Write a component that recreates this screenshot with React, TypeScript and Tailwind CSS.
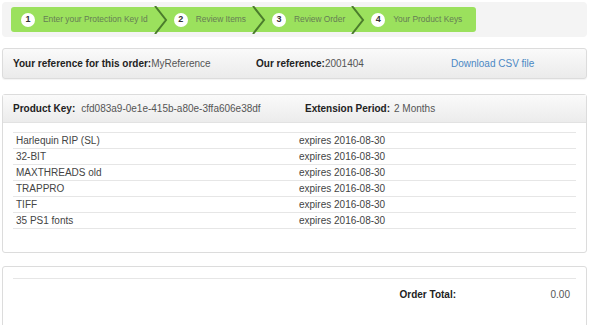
import React from "react";

const steps = [
  { n: 1, label: "Enter your Protection Key Id" },
  { n: 2, label: "Review Items" },
  { n: 3, label: "Review Order" },
  { n: 4, label: "Your Product Keys" },
];

const items = [
  "Harlequin RIP (SL)",
  "32-BIT",
  "MAXTHREADS old",
  "TRAPPRO",
  "TIFF",
  "35 PS1 fonts",
];

function Chevron() {
  return (
    <svg width="14" height="28" viewBox="0 0 14 28" className="shrink-0 -my-[2px]">
      <polyline
        points="1,0 12,14 1,28"
        fill="none"
        stroke="#4b7c2c"
        strokeWidth="2"
      />
    </svg>
  );
}

export default function App() {
  return (
    <div className="w-[589px] h-[325px] overflow-hidden bg-white px-[2px] pt-[2px] font-['Liberation_Sans',Arial,sans-serif] text-[10px]">
      {/* wizard steps */}
      <div className="h-[35px] rounded-[4px] bg-[#f4f4f4] pl-[9px] pt-[5px]">
        <div className="flex h-[25px] w-[465px] items-center whitespace-nowrap rounded-[3px] bg-[#9be15d] pl-[10px]">
          {steps.map((s, i) => (
            <React.Fragment key={s.n}>
              <div className="flex items-center">
                <span className="flex h-[14px] w-[14px] items-center justify-center rounded-full bg-white text-[9px] font-bold text-[#333]">
                  {s.n}
                </span>
                <span className="ml-[8px] text-[8.4px] text-[#667d55]">{s.label}</span>
              </div>
              {i < steps.length - 1 && (
                <div className="mx-[6px] flex">
                  <Chevron />
                </div>
              )}
            </React.Fragment>
          ))}
        </div>
      </div>

      {/* order reference */}
      <div className="mt-[11px] flex h-[31px] items-center rounded-[3px] border border-[#dcdcdc] bg-gradient-to-b from-[#fafafa] to-[#ebebeb] pl-[10px] shadow-[0_1px_1px_rgba(0,0,0,0.05)]">
        <div className="w-[243px] text-[#555]">
          <b className="text-[#222]">Your reference for this order:</b>MyReference
        </div>
        <div className="w-[195px] text-[#555]">
          <b className="text-[#222]">Our reference:</b>2001404
        </div>
        <a className="text-[#4b88c4]">Download CSV file</a>
      </div>

      {/* product key */}
      <div className="mt-[15px] h-[159px] rounded-[3px] border border-[#dcdcdc] bg-white">
        <div className="flex h-[28px] items-center border-b border-[#e2e2e2] bg-gradient-to-b from-[#fafafa] to-[#ececec] pl-[10px]">
          <div className="w-[292px] text-[#555]">
            <b className="mr-[6px] text-[#222]">Product Key:</b>cfd083a9-0e1e-415b-a80e-3ffa606e38df
          </div>
          <div className="text-[#555]">
            <b className="mr-[4px] text-[#222]">Extension Period:</b>2 Months
          </div>
        </div>
        <div className="px-[10px] pt-[9px]">
          <div className="border-b border-[#e6e6e6]">
            {items.map((it) => (
              <div
                key={it}
                className="grid h-[16px] grid-cols-[283px_1fr] items-center border-t border-[#e6e6e6] pl-[3px] text-[#444]"
              >
                <span>{it}</span>
                <span>expires 2016-08-30</span>
              </div>
            ))}
          </div>
        </div>
      </div>

      {/* total */}
      <div className="mt-[13px] h-[70px] rounded-[3px] border border-[#dcdcdc] bg-white px-[10px] pt-[11px]">
        <div className="border-t border-[#e6e6e6]" />
        <div className="mt-[8px] flex items-center justify-end pr-[6px]">
          <b className="w-[151px] text-[#222]">Order Total:</b>
          <span className="text-[#555]">0.00</span>
        </div>
      </div>
    </div>
  );
}
